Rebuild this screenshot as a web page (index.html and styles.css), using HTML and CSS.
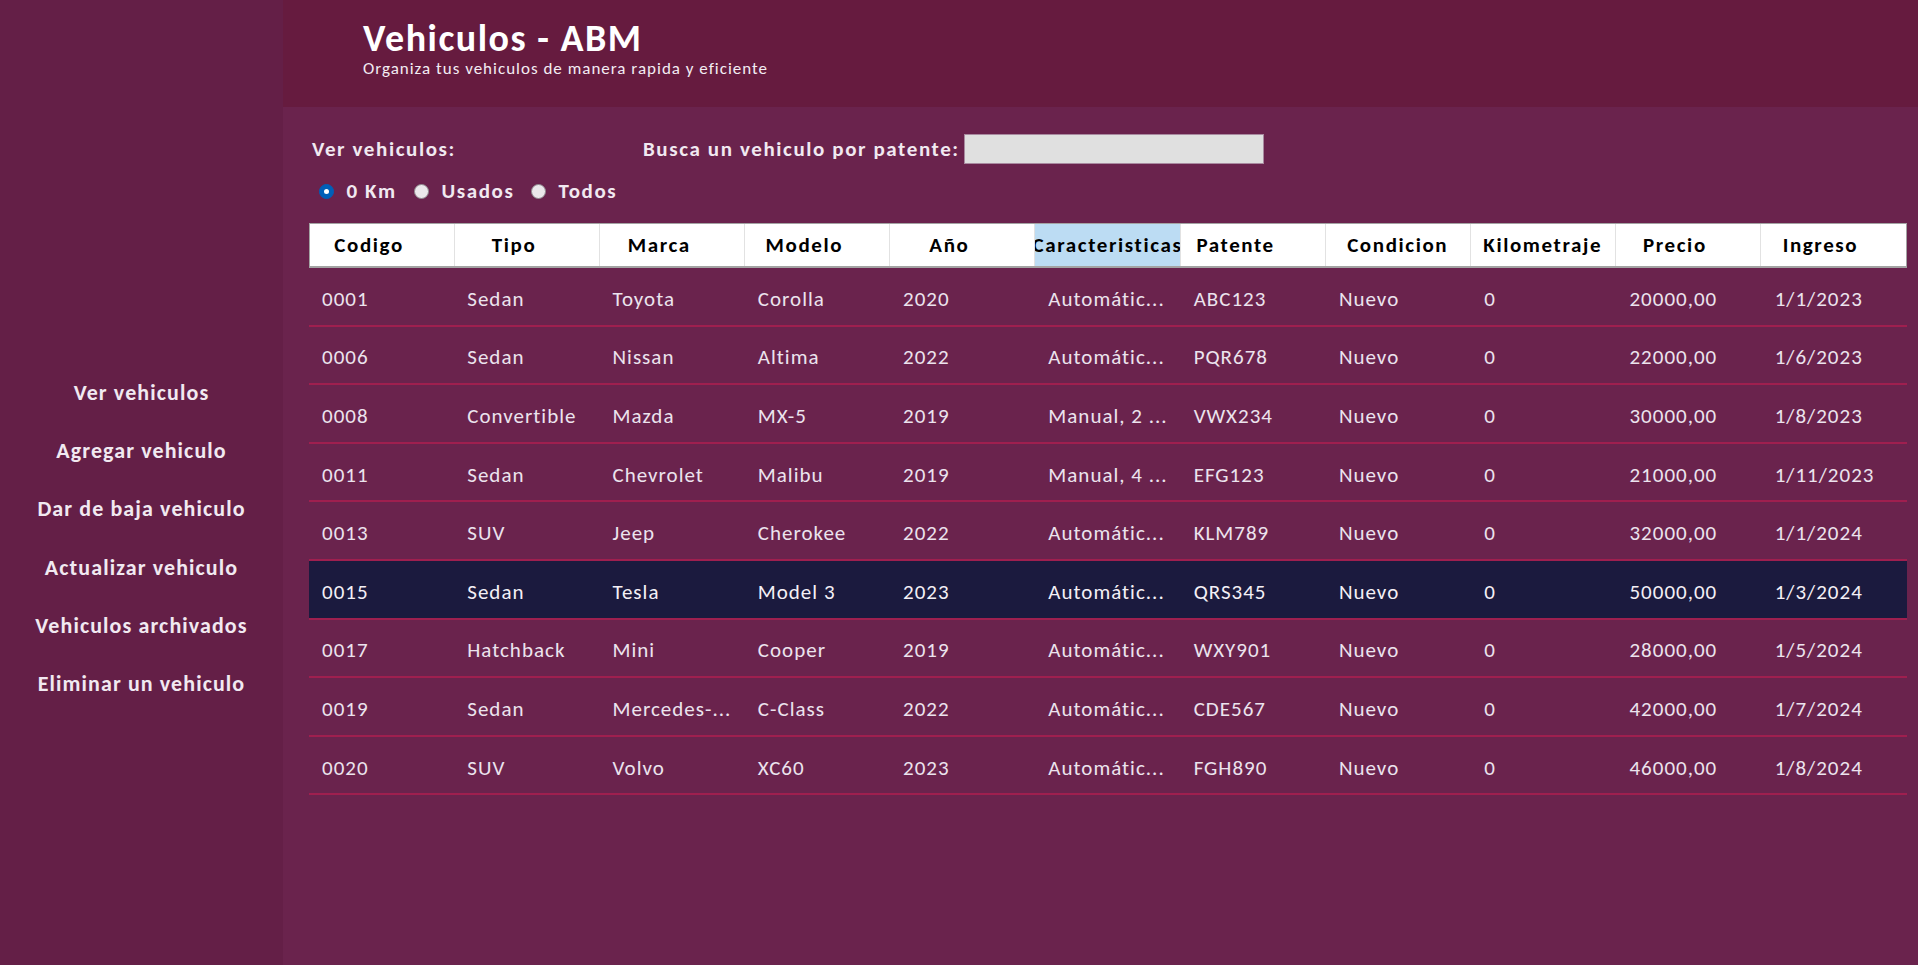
FILE: index.html
```html
<!DOCTYPE html>
<html lang="es">
<head>
<meta charset="utf-8">
<title>Vehiculos - ABM</title>
<link rel="stylesheet" href="styles.css">
</head>
<body>
<div class="app">
  <aside class="sidebar">
    <nav class="menu">
      <a class="menu-item">Ver vehiculos</a>
      <a class="menu-item">Agregar vehiculo</a>
      <a class="menu-item">Dar de baja vehiculo</a>
      <a class="menu-item">Actualizar vehiculo</a>
      <a class="menu-item">Vehiculos archivados</a>
      <a class="menu-item">Eliminar un vehiculo</a>
    </nav>
  </aside>
  <main class="main">
    <header class="topbar">
      <h1 class="title">Vehiculos - ABM</h1>
      <p class="subtitle">Organiza tus vehiculos de manera rapida y eficiente</p>
    </header>
    <section class="content">
      <div class="controls">
        <span class="label label-ver">Ver vehiculos:</span>
        <span class="label label-search">Busca un vehiculo por patente:</span>
        <span class="search-box"></span>
      </div>
      <div class="radios">
        <span class="radio-item"><span class="radio radio-on"></span><span class="label">0 Km</span></span>
        <span class="radio-item"><span class="radio"></span><span class="label">Usados</span></span>
        <span class="radio-item"><span class="radio"></span><span class="label">Todos</span></span>
      </div>
      <div class="grid">
        <div class="grid-head">
          <div class="hc">Codigo</div>
          <div class="hc">Tipo</div>
          <div class="hc">Marca</div>
          <div class="hc">Modelo</div>
          <div class="hc">Año</div>
          <div class="hc hc-sel">Caracteristicas</div>
          <div class="hc hc-tight">Patente</div>
          <div class="hc hc-wide">Condicion</div>
          <div class="hc hc-wide">Kilometraje</div>
          <div class="hc">Precio</div>
          <div class="hc hc-last">Ingreso</div>
        </div>
        <div class="grid-row"><span>0001</span><span>Sedan</span><span>Toyota</span><span>Corolla</span><span>2020</span><span>Automátic...</span><span>ABC123</span><span>Nuevo</span><span>0</span><span>20000,00</span><span>1/1/2023</span></div>
        <div class="grid-row"><span>0006</span><span>Sedan</span><span>Nissan</span><span>Altima</span><span>2022</span><span>Automátic...</span><span>PQR678</span><span>Nuevo</span><span>0</span><span>22000,00</span><span>1/6/2023</span></div>
        <div class="grid-row"><span>0008</span><span>Convertible</span><span>Mazda</span><span>MX-5</span><span>2019</span><span>Manual, 2 ...</span><span>VWX234</span><span>Nuevo</span><span>0</span><span>30000,00</span><span>1/8/2023</span></div>
        <div class="grid-row"><span>0011</span><span>Sedan</span><span>Chevrolet</span><span>Malibu</span><span>2019</span><span>Manual, 4 ...</span><span>EFG123</span><span>Nuevo</span><span>0</span><span>21000,00</span><span>1/11/2023</span></div>
        <div class="grid-row"><span>0013</span><span>SUV</span><span>Jeep</span><span>Cherokee</span><span>2022</span><span>Automátic...</span><span>KLM789</span><span>Nuevo</span><span>0</span><span>32000,00</span><span>1/1/2024</span></div>
        <div class="grid-row grid-row-sel"><span>0015</span><span>Sedan</span><span>Tesla</span><span>Model 3</span><span>2023</span><span>Automátic...</span><span>QRS345</span><span>Nuevo</span><span>0</span><span>50000,00</span><span>1/3/2024</span></div>
        <div class="grid-row"><span>0017</span><span>Hatchback</span><span>Mini</span><span>Cooper</span><span>2019</span><span>Automátic...</span><span>WXY901</span><span>Nuevo</span><span>0</span><span>28000,00</span><span>1/5/2024</span></div>
        <div class="grid-row"><span>0019</span><span>Sedan</span><span>Mercedes-...</span><span>C-Class</span><span>2022</span><span>Automátic...</span><span>CDE567</span><span>Nuevo</span><span>0</span><span>42000,00</span><span>1/7/2024</span></div>
        <div class="grid-row"><span>0020</span><span>SUV</span><span>Volvo</span><span>XC60</span><span>2023</span><span>Automátic...</span><span>FGH890</span><span>Nuevo</span><span>0</span><span>46000,00</span><span>1/8/2024</span></div>
      </div>
    </section>
  </main>
</div>
</body>
</html>
```

FILE: styles.css
```css
html, body {
  margin: 0;
  padding: 0;
  height: 100%;
}

body {
  font-family: "Carlito", "Lato", "Open Sans", sans-serif;
  background: #6a234d;
  color: #efe6ef;
}

.app {
  display: flex;
  height: 965px;
  overflow: hidden;
}

/* Sidebar */
.sidebar {
  width: 283px;
  flex: none;
  background: #641f47;
}

.menu {
  display: flex;
  flex-direction: column;
  align-items: center;
  gap: 32.2px;
  padding-top: 380px;
}

.menu-item {
  font-size: 22px;
  line-height: 26px;
  font-weight: 700;
  letter-spacing: 1.1px;
  color: #f1e9f1;
  white-space: nowrap;
}

/* Main */
.main {
  flex: 1;
  min-width: 0;
  display: flex;
  flex-direction: column;
}

.topbar {
  height: 107px;
  box-sizing: border-box;
  background: #661b3f;
  padding: 19px 0 0 80px;
}

.title {
  margin: 0;
  font-size: 38px;
  line-height: 38px;
  font-weight: 700;
  letter-spacing: 1.5px;
  color: #ffffff;
}

.subtitle {
  margin: 2px 0 0;
  font-size: 17px;
  line-height: 19px;
  letter-spacing: 1px;
  color: #f3ecf3;
}

.content {
  padding: 0 11px 0 26px;
}

.label {
  font-size: 21px;
  line-height: 25px;
  font-weight: 700;
  letter-spacing: 1.6px;
  color: #f1e9f1;
  white-space: nowrap;
}

.controls {
  display: grid;
  grid-template-columns: 331px 321px 300px;
  align-items: center;
  margin-top: 27px;
  height: 30px;
  padding-left: 3px;
}

.search-box {
  height: 30px;
  box-sizing: border-box;
  background: #e0e0e0;
  border: 1px solid #a98aa0;
}

.radios {
  display: grid;
  grid-template-columns: 95px 117px auto;
  align-items: center;
  margin-top: 14px;
  height: 26px;
  padding-left: 9.5px;
}

.radio-item {
  display: flex;
  align-items: center;
  gap: 13px;
}

.radio {
  width: 15px;
  height: 15px;
  box-sizing: border-box;
  border-radius: 50%;
  background: #ebe8eb;
  border: 1px solid #8f8a8f;
  flex: none;
}

.radio-on {
  background: #005fb8;
  border: 1px solid #005fb8;
  position: relative;
}

.radio-on::after {
  content: "";
  position: absolute;
  left: 4px;
  top: 4px;
  width: 5px;
  height: 5px;
  border-radius: 50%;
  background: #ffffff;
}

/* Data grid */
.grid {
  margin-top: 19px;
  width: 1598px;
}

.grid-head {
  display: grid;
  grid-template-columns: repeat(11, 1fr);
  height: 45px;
  box-sizing: border-box;
  background: #ffffff;
  border: 1px solid #a3a3a3;
  border-bottom-width: 2px;
}

.hc {
  display: flex;
  align-items: center;
  justify-content: center;
  padding-right: 26px;
  overflow: hidden;
  white-space: nowrap;
  font-size: 21px;
  line-height: 25px;
  font-weight: 700;
  letter-spacing: 1.6px;
  color: #000000;
  border-right: 1px solid #e2e2e2;
}

.hc-wide {
  padding-right: 0;
}

.hc-tight {
  padding-right: 34px;
}

.hc-sel {
  background: #bcdcf3;
  padding-right: 0;
}

.hc-last {
  border-right: 0;
}

.grid-row {
  display: grid;
  grid-template-columns: repeat(11, 1fr);
  align-items: center;
  height: 58.6px;
  box-sizing: border-box;
  padding-top: 6px;
  border-bottom: 2px solid #9f1f4f;
  font-size: 21px;
  line-height: 25px;
  letter-spacing: 1px;
  color: #ece3ee;
}

.grid-row > span {
  padding-left: 13px;
  white-space: nowrap;
  overflow: hidden;
}

.grid-row-sel {
  background: #1b1a3e;
  color: #f4f0f6;
}
```
